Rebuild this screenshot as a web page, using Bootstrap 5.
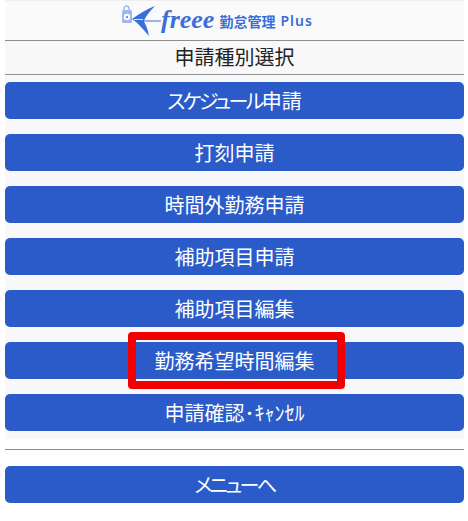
<!doctype html>
<html lang="ja"><head><meta charset="utf-8">
<link rel="stylesheet" href="https://cdn.jsdelivr.net/npm/bootstrap@5.3.0/dist/css/bootstrap.min.css">
<style>
body{background:#fff;font-family:"Noto Sans CJK JP","Liberation Sans",sans-serif;overflow:hidden}
.shell{padding:0 4px 0 5px;height:521px}
.logo-row{height:40px;color:#3a6ed8;background:#fafafa;padding-left:116px;border-top:1px solid #eee}
.logo-word{font-family:"Liberation Serif",serif;font-style:italic;font-weight:700;font-size:26px;line-height:1;margin:-2px 0 0 0}
.logo-kanji{font-size:14px;font-weight:700;margin-left:5px;line-height:1}
.logo-plus{font-family:"Noto Sans",sans-serif;font-size:14px;font-weight:600;letter-spacing:1px;margin-left:5px;line-height:1}
.title-row{height:35px;background:#f8f8f8;border-top:1px solid #8e8e8e;border-bottom:1px solid #8e8e8e;font-size:20px;color:#222;line-height:32px}
.req-list{background:#f8f8fa;padding:7px 0 8px;gap:15px}
.req-btn{height:37px;padding:0;background:#2a5bc9;border:0;border-radius:5px;color:#fff;font-size:20px;line-height:37px;width:100%;font-feature-settings:"palt"}
.req-btn:hover{background:#2a5bc9;color:#fff}
.kana-tight{letter-spacing:-2.600px}
.kana-menu{letter-spacing:-2.500px}
.sep{margin:10px 0 16px;border:0;border-top:1px solid #8e8e8e;opacity:1}
.mark-box{position:absolute;left:123px;top:-10px;width:217px;height:57px;border:8px solid #f00000;border-radius:4px}
</style></head><body>
<div class="shell">
<div class="logo-row d-flex align-items-center">
<svg width="40" height="32" viewBox="0 0 40 32" class="flex-shrink-0"><path d="M3 5V3.500a2.500 2.500 0 0 1 5 0V5" fill="none" stroke="#9db8ec" stroke-width="1.400"/><rect x="1" y="5" width="10" height="13" rx="1.500" fill="#9db8ec"/><circle cx="6" cy="12" r="3.200" fill="#fff"/><circle cx="6" cy="12" r="1.200" fill="#6f93de"/><path d="M34 1C26 4 18 9 11 14C17 18 22 24 28 31C27 25 25 20 23 16.500H40V15.500H23C25 11 29 6 34 1Z" fill="#3a6ed8"/><path d="M13 14.500H22" stroke="#fff" stroke-width=".8"/></svg>
<span class="logo-word">freee</span><span class="logo-kanji">勤怠管理</span><span class="logo-plus">Plus</span>
</div>
<div class="title-row text-center">申請種別選択</div>
<div class="req-list d-flex flex-column">
<a class="btn req-btn"><span class="kana-tight">スケジュール</span>申請</a>
<a class="btn req-btn">打刻申請</a>
<a class="btn req-btn">時間外勤務申請</a>
<a class="btn req-btn">補助項目申請</a>
<a class="btn req-btn">補助項目編集</a>
<div class="position-relative"><a class="btn req-btn">勤務希望時間編集</a><div class="mark-box"></div></div>
<a class="btn req-btn">申請確認･ｷｬﾝｾﾙ</a>
</div>
<hr class="sep">
<a class="btn req-btn"><span class="kana-menu">メニューへ</span></a>
</div>
</body></html>
